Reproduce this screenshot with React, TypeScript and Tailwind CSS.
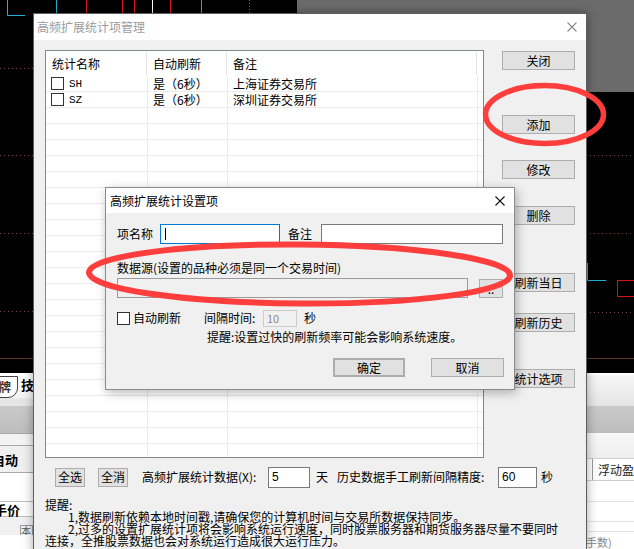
import clsx from "clsx";
import type { ReactNode } from "react";

function Btn({ children, className }: { children?: ReactNode; className?: string }) {
  return (
    <div
      className={clsx(
        "flex shrink-0 items-center justify-center border border-[#adadad] bg-[#e1e1e1] text-[12px] leading-none text-black",
        className
      )}
    >
      {children}
    </div>
  );
}

function Check({ className }: { className?: string }) {
  return <span className={clsx("block h-[13px] w-[13px] shrink-0 border border-[#333333] bg-white", className)} />;
}

function CloseX({ color }: { color: string }) {
  return (
    <svg width="10" height="10" viewBox="0 0 10 10" className="shrink-0">
      <path d="M0.5 0.5 L9.5 9.5 M9.5 0.5 L0.5 9.5" stroke={color} strokeWidth="1.1" />
    </svg>
  );
}

const items = [
  { name: "SH", auto: "是（6秒）", note: "上海证券交易所" },
  { name: "SZ", auto: "是（6秒）", note: "深圳证券交易所" },
];
const emptyRows = Array.from({ length: 22 }, (_, i) => i);

const sideButtons = [
  { label: "关闭", mt: "mt-[1px]" },
  { label: "添加", mt: "mt-[45px]" },
  { label: "修改", mt: "mt-[26px]" },
  { label: "删除", mt: "mt-[27px]" },
  { label: "刷新当日", mt: "mt-[48px]" },
  { label: "刷新历史", mt: "mt-[21px]" },
  { label: "统计选项", mt: "mt-[37px]" },
];

// chart lines of the trading screen behind the dialogs
function ChartLines() {
  return (
    <svg className="absolute left-0 top-0" width="634" height="549">
      <g fill="none" strokeWidth="1">
        <path d="M7.5 0 V15.5 H25" stroke="#1fb2d6" />
        <path d="M56.5 0 V14" stroke="#1fb2d6" />
        <path d="M201.5 0 V14" stroke="#1fb2d6" />
        <path d="M86.5 0 V14 M122.5 0 V14 M134.5 0 V14 M170.5 0 V14" stroke="#e01818" />
        <path d="M152.5 0 V14" stroke="#ffffff" />
        <path d="M249.5 0 V14" stroke="#6a6a6a" strokeDasharray="1 2" />
        <path
          d="M0 68.5 H33 M0 155.5 H33 M0 233.5 H33 M0 311.5 H33 M586 155.5 H634 M586 233.5 H634 M586 312.5 H634"
          stroke="#7a4646"
          strokeDasharray="1 3"
        />
        <path d="M0 358.5 H33 M586 358.5 H634" stroke="#5c3a2c" />
        <path d="M587.5 263 V280.5 H606" stroke="#1fb2d6" />
        <rect x="617.5" y="280.5" width="22" height="16" stroke="#d41414" />
      </g>
    </svg>
  );
}

function BackPanel() {
  return (
    <div className="absolute left-0 top-[373px] flex h-[176px] w-[634px] border-t-2 border-white bg-[#f0f0f0]">
      {/* left edge of the quote window */}
      <div className="flex w-[33px] flex-col overflow-hidden">
        <div className="flex h-[23px] items-end bg-gradient-to-b from-white to-[#f4f4f4]">
          <div className="-ml-[4px] flex h-[22px] items-center rounded-br-[10px] border border-[#444] bg-white pl-[2px] pr-[6px] text-[12px] font-bold text-[#333]">
            牌
          </div>
          <div className="ml-[3px] self-start pt-[2px] text-[13px] font-bold">技</div>
        </div>
        <div className="h-[8px] bg-[#e6e6e6]" />
        <div className="h-[27px] bg-gradient-to-b from-[#c9c9c9] to-[#bdbdbd]" />
        <div className="h-[12px] border-t border-[#a8a8a8] bg-[#f3f3f3]" />
        <div className="flex h-[28px] items-end border-y border-[#a8a8a8] bg-[#f0f0f0] pb-[6px]">
          <span className="-ml-[21px] whitespace-nowrap text-[13px] font-bold leading-none">启自动</span>
        </div>
        <div className="h-[28px] bg-white" />
        <div className="flex h-[16px] items-center border-y border-[#bdbdbd] bg-white">
          <span className="-ml-[6px] whitespace-nowrap text-[13px] font-bold leading-none">手价</span>
        </div>
        <div className="flex h-[18px] items-end justify-end bg-[#f0f0f0]">
          <div className="h-[10px] w-[13px] border border-b-0 border-[#9a9a9a] text-[10px] leading-[10px] text-[#555]">本</div>
        </div>
        <div className="flex-1 bg-white" />
      </div>
      <div className="flex-1" />
      {/* right edge of the quote window */}
      <div className="flex w-[48px] flex-col overflow-hidden">
        <div className="h-[31px] bg-gradient-to-b from-[#f7f7f7] to-[#e4e4e4]" />
        <div className="h-[27px] bg-gradient-to-b from-[#c9c9c9] to-[#bdbdbd]" />
        <div className="h-[25px] bg-gradient-to-b from-[#f8f8f8] to-[#eeeeee]" />
        <div className="flex h-[23px] items-center border-y border-[#cfcfcf] bg-white">
          <div className="h-full w-[12px] border-r border-[#9a9a9a]" />
          <span className="ml-[5px] whitespace-nowrap text-[12px] leading-none text-[#222]">浮动盈</span>
        </div>
        <div className="h-[21px] border-b border-[#e2e2e2] bg-white" />
        <div className="h-[20px] border-b border-[#e2e2e2] bg-white" />
        <div className="h-[10px] border-b border-[#e2e2e2] bg-white" />
        <div className="flex-1 bg-white pt-[5px] text-[11px] leading-none text-[#888]">手数)</div>
      </div>
    </div>
  );
}

function SettingDialog() {
  return (
    <div className="absolute left-[105px] top-[187px] flex h-[203px] w-[410px] flex-col border border-[#8c8c8c] bg-[#f0f0f0] shadow-[2px_3px_10px_rgba(0,0,0,0.28)]">
      <div className="flex h-[25px] shrink-0 items-center justify-between bg-white pl-[4px] pr-[9px]">
        <span className="text-[12px] leading-none text-black">高频扩展统计设置项</span>
        <CloseX color="#111" />
      </div>
      <div className="flex flex-col pl-[11px] pr-[10px] pt-[11px]">
        <div className="flex h-[20px] items-center">
          <span className="w-[43px]">项名称</span>
          <div className="flex h-[20px] w-[120px] items-center border border-[#0078d7] bg-white">
            <span className="ml-[4px] h-[12px] w-[1px] bg-black" />
          </div>
          <span className="ml-[8px] w-[33px]">备注</span>
          <div className="h-[20px] w-[182px] border border-[#7a7a7a] bg-white" />
        </div>
        <div className="mt-[16px] leading-[16px]">数据源(设置的品种必须是同一个交易时间)</div>
        <div className="mt-[2px] flex items-center">
          <div className="h-[20px] w-[351px] border border-[#9b9b9b] bg-[#f0f0f0]" />
          <Btn className="ml-[11px] h-[19px] w-[24px] items-end pb-[2px] text-[#777]">..</Btn>
        </div>
        <div className="mt-[11px] flex h-[18px] items-center">
          <div className="flex w-[87px] items-center">
            <Check />
            <span className="ml-[3px]">自动刷新</span>
          </div>
          <span className="w-[59px]">间隔时间:</span>
          <div className="flex h-[17px] w-[34px] items-center border border-[#cccccc] bg-[#f0f0f0] pl-[3px] text-[11px] text-[#8d8d8d]">
            10
          </div>
          <span className="ml-[7px]">秒</span>
        </div>
        <div className="ml-[90px] mt-[2px] leading-[16px]">提醒:设置过快的刷新频率可能会影响系统速度。</div>
        <div className="mt-[13px] flex justify-end gap-[26px]">
          <Btn className="h-[19px] w-[72px] border-2 border-[#0078d7]">确定</Btn>
          <Btn className="h-[19px] w-[73px]">取消</Btn>
        </div>
      </div>
    </div>
  );
}

export default function App() {
  return (
    <div className="relative h-[549px] w-[634px] overflow-hidden bg-black font-['Noto_Sans_CJK_SC','Liberation_Sans',sans-serif] text-[12px] leading-[16px] text-black">
      <div className="absolute left-[297px] top-0 h-[92px] w-[337px] bg-[#6b6b6b]" />
      <ChartLines />
      <BackPanel />

      {/* 高频扩展统计项管理 */}
      <div className="absolute left-[33px] top-[13px] flex h-[545px] w-[554px] flex-col border border-[#5e5e5e] bg-[#f0f0f0] shadow-[0_0_10px_rgba(0,0,0,0.35)]">
        <div className="flex h-[26px] shrink-0 items-center justify-between bg-white pl-[3px] pr-[9px]">
          <span className="text-[12px] leading-none text-[#9c9c9c]">高频扩展统计项管理</span>
          <CloseX color="#8a8a8a" />
        </div>
        <div className="flex flex-col pl-[11px] pt-[10px]">
          <div className="flex">
            <div className="h-[408px] w-[439px] overflow-hidden border border-[#828790] bg-white">
              <div className="flex h-[25px] items-center">
                <div className="flex h-[23px] w-[101px] items-center border-r border-[#e3e3e3] pl-[6px]">统计名称</div>
                <div className="flex h-[23px] w-[80px] items-center border-r border-[#e3e3e3] pl-[6px]">自动刷新</div>
                <div className="flex h-[23px] w-[250px] items-center border-r border-[#e3e3e3] pl-[6px]">备注</div>
              </div>
              {items.map((it) => (
                <div key={it.name} className="flex h-[16px] border-b border-[#ebebeb]">
                  <div className="flex w-[102px] items-center border-r border-[#ebebeb] pl-[5px]">
                    <Check />
                    <span className="ml-[5px] font-['Liberation_Mono',monospace] text-[11px]">{it.name}</span>
                  </div>
                  <div className="flex w-[80px] items-center border-r border-[#ebebeb] pl-[5px]">{it.auto}</div>
                  <div className="flex w-[250px] items-center border-r border-[#ebebeb] pl-[5px]">{it.note}</div>
                </div>
              ))}
              {emptyRows.map((i) => (
                <div key={i} className="flex h-[16px] border-b border-[#ebebeb]">
                  <div className="w-[102px] border-r border-[#ebebeb]" />
                  <div className="w-[80px] border-r border-[#ebebeb]" />
                  <div className="w-[250px] border-r border-[#ebebeb]" />
                </div>
              ))}
            </div>
            <div className="ml-[18px] flex flex-col">
              {sideButtons.map((b) => (
                <Btn key={b.label} className={clsx("h-[19px] w-[73px]", b.mt)}>
                  {b.label}
                </Btn>
              ))}
            </div>
          </div>

          <div className="mt-[8px] flex h-[22px] items-center">
            <Btn className="ml-[10px] h-[19px] w-[30px]">全选</Btn>
            <Btn className="ml-[13px] h-[19px] w-[30px]">全消</Btn>
            <span className="ml-[14px] w-[126px] whitespace-nowrap">高频扩展统计数据(X):</span>
            <div className="flex h-[21px] w-[42px] items-center border border-[#7a7a7a] bg-white pl-[3px] font-['Liberation_Sans',sans-serif]">
              5
            </div>
            <span className="ml-[6px] w-[21px]">天</span>
            <span className="w-[161px] whitespace-nowrap">历史数据手工刷新间隔精度:</span>
            <div className="flex h-[21px] w-[39px] items-center border border-[#7a7a7a] bg-white pl-[3px] font-['Liberation_Sans',sans-serif]">
              60
            </div>
            <span className="ml-[4px]">秒</span>
          </div>

          <div className="mt-[11px] flex flex-col leading-[12px]">
            <div>提醒:</div>
            <div className="pl-[23px]">1,数据刷新依赖本地时间戳,请确保您的计算机时间与交易所数据保持同步。</div>
            <div className="pl-[23px]">2,过多的设置扩展统计项将会影响系统运行速度，同时股票服务器和期货服务器尽量不要同时</div>
            <div>连接，全推股票数据也会对系统运行造成很大运行压力。</div>
          </div>
        </div>
      </div>

      <SettingDialog />

      {/* red hand-drawn marks */}
      <svg className="pointer-events-none absolute left-0 top-0" width="634" height="549">
        <ellipse cx="544.5" cy="114.5" rx="59" ry="29" fill="none" stroke="#fe3d3d" strokeWidth="5.5" />
        <ellipse
          cx="299.5"
          cy="274"
          rx="210.5"
          ry="29.5"
          fill="none"
          stroke="#fe3d3d"
          strokeWidth="6"
          transform="rotate(0.4 299.5 274)"
        />
      </svg>
    </div>
  );
}
